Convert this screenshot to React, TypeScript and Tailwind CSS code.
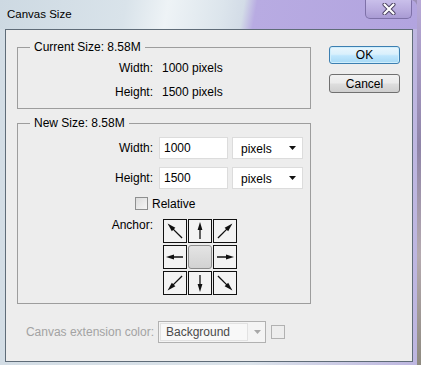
import type { ReactNode } from 'react'

const font = { fontFamily: '"Liberation Sans", Arial, sans-serif' }

// arrow pointing up, rotated per anchor cell
function Arrow({ angle }: { angle: number }) {
  const diag = angle % 90 !== 0
  return (
    <svg width="22" height="22" viewBox="0 0 22 22">
      <g transform={`rotate(${angle} 11 11)`}>
        <line x1="11" y1={diag ? 21 : 19} x2="11" y2="8" stroke="#111" strokeWidth="1.3" />
        <polygon points={diag ? '11,0.5 8.5,9 13.5,9' : '11,2 8.6,10 13.4,10'} fill="#111" />
      </g>
    </svg>
  )
}

function Cell({ children }: { children?: ReactNode }) {
  return (
    <div className="w-[24px] h-[24px] border border-[#111] bg-[#f3f3f3] flex items-center justify-center">
      {children}
    </div>
  )
}

function Field({ value }: { value: string }) {
  return (
    <div className="w-[69px] h-[22px] bg-white border border-[#dcdcdc] pl-[4px] flex items-center text-[12px] text-black">
      {value}
    </div>
  )
}

function UnitSelect() {
  return (
    <div className="w-[71px] h-[22px] bg-white border border-[#dcdcdc] pl-[8px] pr-[6px] flex items-center justify-between text-[12px] text-black">
      <span className="mt-[2px]">pixels</span>
      <svg width="7" height="4" viewBox="0 0 7 4">
        <polygon points="0,0 7,0 3.5,4" fill="#111" />
      </svg>
    </div>
  )
}

export default function App() {
  const anchors = [315, 0, 45, 270, -1, 90, 225, 180, 135]

  return (
    <div className="w-[421px] h-[365px] overflow-hidden flex bg-[#9c8fb8]" style={font}>
      {/* window */}
      <div className="w-[417px] h-[365px] flex flex-col rounded-tr-[7px] overflow-hidden bg-[linear-gradient(90deg,#d3dde5_0%,#dbe3ea_60%,#bdb6e0_100%)]">
        {/* title bar */}
        <div className="h-[29px] flex items-start justify-between bg-[linear-gradient(100deg,#cdd9e2_0%,#d9e3ea_30%,#eef3f6_40%,#dce5ec_53%,#d3dce7_58%,#b8abe2_61%,#b2a4df_100%)]">
          <span className="pl-[7px] pt-[7px] text-[11.5px] leading-[14px] text-black">Canvas Size</span>
          <div className="w-[47px] h-[19px] mr-[5px] rounded-b-[5px] border border-t-0 border-[#7e71a8] bg-[linear-gradient(180deg,#c9bfea_0%,#b9acdf_55%,#a99bd4_100%)] flex items-center justify-center">
            <svg width="14" height="12" viewBox="0 0 14 12">
              <path d="M2.5 1.5 L11.5 10.5 M11.5 1.5 L2.5 10.5" stroke="#4a4060" strokeWidth="4" strokeLinecap="round" />
              <path d="M2.5 1.5 L11.5 10.5 M11.5 1.5 L2.5 10.5" stroke="#ffffff" strokeWidth="2.2" strokeLinecap="round" />
            </svg>
          </div>
        </div>

        {/* client area */}
        <div className="ml-[5px] w-[408px] h-[333px] border border-[#5f6c78] bg-[#ededed] text-[12px] leading-[14px] text-black flex flex-col">
          <div className="flex">
            <div className="pl-[11px]">
              <fieldset className="mt-[10px] w-[294px] border border-[#9d9d9d] pb-[9px]">
                <legend className="ml-[12px] px-[4px] leading-[14px]">Current Size: 8.58M</legend>
                <div className="mt-[7px] flex flex-col gap-[10px]">
                  <div className="flex">
                    <span className="w-[135px] text-right">Width:</span>
                    <span className="ml-[9px]">1000 pixels</span>
                  </div>
                  <div className="flex">
                    <span className="w-[135px] text-right">Height:</span>
                    <span className="ml-[9px]">1500 pixels</span>
                  </div>
                </div>
              </fieldset>

              <fieldset className="mt-[7px] w-[294px] border border-[#9d9d9d] pb-[8px]">
                <legend className="ml-[12px] px-[4px] leading-[14px]">New Size: 8.58M</legend>
                <div className="mt-[7px] flex items-center">
                  <span className="w-[135px] text-right">Width:</span>
                  <div className="ml-[6px]"><Field value="1000" /></div>
                  <div className="ml-[4px]"><UnitSelect /></div>
                </div>
                <div className="mt-[8px] flex items-center">
                  <span className="w-[135px] text-right">Height:</span>
                  <div className="ml-[6px]"><Field value="1500" /></div>
                  <div className="ml-[4px]"><UnitSelect /></div>
                </div>
                <div className="mt-[8px] h-[13px] flex items-center">
                  <div className="ml-[117px] w-[13px] h-[13px] border border-[#8e8f8f] bg-[linear-gradient(135deg,#dcdcdc,#f6f6f6)]" />
                  <span className="ml-[4px]">Relative</span>
                </div>
                <div className="mt-[9px] flex items-start">
                  <span className="w-[135px] text-right mt-[-1px]">Anchor:</span>
                  <div className="ml-[10px] grid grid-cols-[24px_24px_24px] gap-x-[1px] gap-y-[2px]">
                    {anchors.map((a, i) =>
                      a < 0 ? (
                        <div key={i} className="w-[24px] h-[24px] rounded-[3px] border border-[#8c8c8c] bg-[linear-gradient(180deg,#e4e4e4,#d2d2d2)]" />
                      ) : (
                        <Cell key={i}>
                          <Arrow angle={a} />
                        </Cell>
                      )
                    )}
                  </div>
                </div>
              </fieldset>
            </div>

            {/* buttons */}
            <div className="ml-[18px] pt-[16px] flex flex-col">
              <button className="w-[71px] h-[18px] rounded-[3px] border border-[#3c7fb1] bg-[linear-gradient(180deg,#eaf6fd_0%,#d9f0fc_45%,#bee6fd_55%,#a7d9f5_100%)] text-[12px] leading-[14px] text-black shadow-[inset_0_0_0_1px_#cfeefc]">
                OK
              </button>
              <button className="mt-[10px] w-[71px] h-[19px] rounded-[3px] border border-[#707070] bg-[linear-gradient(180deg,#f2f2f2_0%,#ebebeb_45%,#dddddd_55%,#cfcfcf_100%)] text-[12px] leading-[14px] text-black">
                Cancel
              </button>
            </div>
          </div>

          {/* canvas extension color */}
          <div className="mt-[17px] flex items-center">
            <span className="w-[152px] text-right pr-[4px] text-[#a3a3a3]">Canvas extension color:</span>
            <div className="w-[108px] h-[22px] border border-[#b1b1b1] bg-[#f4f4f4] flex items-center p-[1px]">
              <div className="w-[88px] h-[18px] border border-[#e2e2e2] bg-[#f8f8f8] pl-[5px] flex items-center text-[#4a4a4a]">
                Background
              </div>
              <svg className="ml-[6px]" width="7" height="4" viewBox="0 0 7 4">
                <polygon points="0,0 7,0 3.5,4" fill="#a8a8a8" />
              </svg>
            </div>
            <div className="ml-[5px] w-[14px] h-[14px] border border-[#b1b1b1] bg-[#ededed]" />
          </div>
        </div>
      </div>
      <div className="w-[4px] h-[365px] bg-[linear-gradient(180deg,#b8a9d8_0%,#8f84a8_40%,#b5aab0_70%,#8e8a80_100%)]" />
    </div>
  )
}
